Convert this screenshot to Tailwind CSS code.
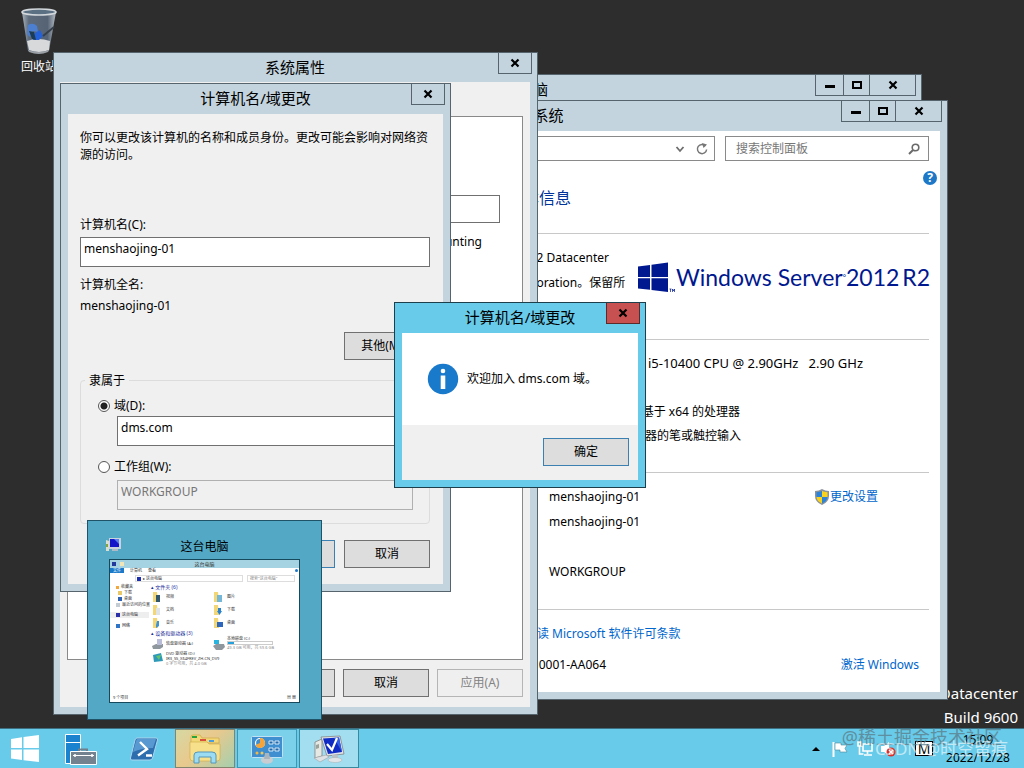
<!DOCTYPE html>
<html lang="zh-CN">
<head>
<meta charset="utf-8">
<meta name="viewport" content="width=device-width, initial-scale=1">
<title>系统属性</title>
<script src="https://cdn.jsdelivr.net/npm/@tailwindcss/browser@4"></script>
</head>
<body class="flex h-screen flex-col overflow-hidden bg-[#2d2d2d] font-['Noto_Sans','Noto_Sans_CJK_SC',sans-serif] text-xs text-black">

<main class="relative min-h-0 flex-1">

  <!-- Desktop icon -->
  <div class="absolute left-[7px] top-2 flex w-16 flex-col items-center text-white">
    <svg class="h-[46px] w-10" viewBox="0 0 40 46" aria-hidden="true">
      <defs><linearGradient id="bin" x1="0" x2="1"><stop offset="0" stop-color="#a9b3bd"/><stop offset=".2" stop-color="#5d6b7c"/><stop offset=".75" stop-color="#566374"/><stop offset="1" stop-color="#b4bcc4"/></linearGradient></defs>
      <path d="M3 4 L9 43 Q20 48 30 43 L37 4Z" fill="url(#bin)"/>
      <path d="M8 33 Q19 29 31 33 L30 42 Q20 46 10 42Z" fill="#d8d9db"/>
      <path d="M9 42 Q20 46 30 42 L29 44 Q20 48 10 44Z" fill="#9aa0a6"/>
      <path d="M9 17 q5 -3 9 1 l1 6 -5 -1 -3 6 -3 -3z" fill="#4d7fd0"/><path d="M16 25 l5 -3 3 6 -4 4 -6 0z" fill="#2460d8"/><path d="M10 23 l5 1 2 8 -4 -1z" fill="#1c3c54"/>
      <path d="M35 19 L24 28" stroke="#36404c" stroke-width="2"/>
      <ellipse cx="20" cy="4" rx="17" ry="3" fill="#5c7084" stroke="#d3d8dc" stroke-width="1.6"/>
    </svg>
    <span class="mt-[5px] whitespace-nowrap leading-4">回收站</span>
  </div>

  <!-- Build stamp -->
  <div class="absolute -bottom-px right-1.5 text-right text-[15px] leading-6 text-white">
    <p>Datacenter</p>
    <p>Build 9600</p>
  </div>

  <!-- Explorer window at the back -->
  <section aria-label="这台电脑" class="absolute left-[114px] top-[74px] h-[560px] w-[808px] border border-[#56656d] bg-[#c3d4de]">
    <header class="relative">
      <h2 class="text-center text-[15px] leading-7">这台电脑</h2>
      <div class="absolute right-[5px] top-0 flex h-[21px] border border-t-0 border-[#56656d]">
        <button aria-label="最小化" class="flex w-7 items-center justify-center border-r border-[#56656d]"><svg class="h-2.5 w-2.5" viewBox="0 0 10 10"><path d="M0 5h10v3H0z"/></svg></button>
        <button aria-label="最大化" class="flex w-[26px] items-center justify-center border-r border-[#56656d]"><svg class="h-2.5 w-2.5" viewBox="0 0 10 10"><path d="M1 2h8v6h-8z" fill="none" stroke="#000" stroke-width="2"/></svg></button>
        <button aria-label="关闭" class="flex w-[45px] items-center justify-center"><svg class="h-2.5 w-2.5" viewBox="0 0 10 10"><path d="M1.500 1.500l7 7m0-7l-7 7" stroke="#000" stroke-width="2.200"/></svg></button>
      </div>
    </header>
  </section>

  <!-- System window -->
  <section aria-label="系统" class="absolute left-[149px] top-[100px] flex h-[600px] w-[799px] flex-col border border-[#56656d] bg-[#c3d4de] px-[7px] pb-[7px]">
    <header class="relative h-[30px] shrink-0">
      <h2 class="text-center text-[15px] leading-7">系统</h2>
      <div class="absolute -right-0.5 top-0 flex h-[21px] border border-t-0 border-[#56656d]">
        <button aria-label="最小化" class="flex w-7 items-center justify-center border-r border-[#56656d]"><svg class="h-2.5 w-2.5" viewBox="0 0 10 10"><path d="M0 5h10v3H0z"/></svg></button>
        <button aria-label="最大化" class="flex w-[26px] items-center justify-center border-r border-[#56656d]"><svg class="h-2.5 w-2.5" viewBox="0 0 10 10"><path d="M1 2h8v6h-8z" fill="none" stroke="#000" stroke-width="2"/></svg></button>
        <button aria-label="关闭" class="flex w-[45px] items-center justify-center"><svg class="h-2.5 w-2.5" viewBox="0 0 10 10"><path d="M1.500 1.500l7 7m0-7l-7 7" stroke="#000" stroke-width="2.200"/></svg></button>
      </div>
    </header>
    <div class="flex-1 bg-white pl-[372px] pr-[11px] pt-[5px]">
      <div class="flex gap-2.5">
        <div class="flex h-[25px] flex-1 items-center justify-end gap-2.5 border border-[#8a8a8a] pr-1.5">
          <button aria-label="历史记录"><svg class="h-3 w-3" viewBox="0 0 12 12"><path d="M2.500 4l3.500 4 3.500-4" fill="none" stroke="#6d6d6d" stroke-width="1.800"/></svg></button>
          <button aria-label="刷新"><svg class="h-3 w-3" viewBox="0 0 12 12"><path d="M9.500 3A4.600 4.600 0 1 0 10.600 6.500" fill="none" stroke="#777" stroke-width="1.500"/><path d="M6 0l5 1.500-3.500 3.500z" fill="#777"/></svg></button>
        </div>
        <label class="flex h-[25px] w-[204px] items-center border border-[#8a8a8a] pl-2.5 pr-2">
          <input type="search" aria-label="搜索控制面板" placeholder="搜索控制面板" class="min-w-0 flex-1 bg-transparent outline-none placeholder:text-[#777]">
          <svg class="h-3 w-3" viewBox="0 0 12 12" aria-hidden="true"><circle cx="7.500" cy="4.500" r="3.300" fill="none" stroke="#6a6a6a" stroke-width="1.600"/><path d="M5 7L1 11" stroke="#6a6a6a" stroke-width="2"/></svg>
        </label>
      </div>
      <div class="-mr-2 mt-2.5 flex h-[15px] justify-end">
        <button aria-label="帮助" class="flex h-3.5 w-3.5 items-center justify-center rounded-full bg-[#1d78c8] text-xs font-bold leading-none text-white">?</button>
      </div>
      <h3 class="flex h-6 w-[42px] items-center justify-end whitespace-nowrap text-base text-[#003399]">本信息</h3>
      <div class="mt-[23px] flex h-[106px] border-t border-[#c8c8c8] pt-[11px]">
        <div class="w-[108px] shrink-0 whitespace-nowrap leading-[25px]">
          <p>R2 Datacenter</p>
          <p>poration。保留所</p>
        </div>
        <div class="flex h-16 items-center gap-px text-[#00188f]">
          <svg class="h-[31px] w-[38px] shrink-0" viewBox="0 0 38 31" aria-hidden="true"><path d="M1 4.500L13 3v12H1zM14.500 2.800L31 .5V15H14.500zM1 16.300h12v11.500L1 26.500zM14.500 16.300H31V30l-16.500-2z" fill="#00188f"/><path d="M32.500 27h2m-1 0v3M35.500 30v-3l1 2 1-2v3" fill="none" stroke="#00188f" stroke-width=".7"/></svg>
          <p class="flex items-baseline whitespace-nowrap font-['Lato','Noto_Sans',sans-serif] text-[23px] leading-8"><span>Windows Server</span><span class="self-center text-[8px]">°</span><span>2012</span><span class="ml-[3px]">R2</span></p>
        </div>
      </div>
      <div class="h-[133px] border-t border-[#c8c8c8] pt-3">
        <p class="h-12 w-[334px] whitespace-pre text-right text-[13px] leading-[23px]">) i5-10400 CPU @ 2.90GHz   2.90 GHz</p>
        <p class="w-[211px] text-right leading-6">基于 x64 的处理器</p>
        <p class="w-[212px] text-right leading-6">示器的笔或触控输入</p>
      </div>
      <div class="flex h-[137px] justify-between border-t border-[#c8c8c8] pl-5 pr-[51px] pt-[11px]">
        <div class="leading-[25px]">
          <p>menshaojing-01</p>
          <p class="mb-[25px]">menshaojing-01</p>
          <p>WORKGROUP</p>
        </div>
        <a href="#" class="flex h-[26px] items-center gap-px text-[#0066cc]">
          <svg class="h-4 w-3.5" viewBox="0 0 14 16" aria-hidden="true"><path d="M7 0Q10 2 14 2V7Q14 13 7 16 0 13 0 7V2Q4 2 7 0Z" fill="#8a929b"/><path d="M7 2V8H1.500V3.200Q5 3 7 2Z" fill="#2d83d8"/><path d="M7 2V8h5.500V3.200Q9 3 7 2Z" fill="#f8d21c"/><path d="M7 8H1.500Q2 12.500 7 14.500Z" fill="#f8d21c"/><path d="M7 8h5.500Q12 12.500 7 14.500Z" fill="#2d83d8"/></svg>
          <span>更改设置</span>
        </a>
      </div>
      <div class="border-t border-[#c8c8c8] pt-3">
        <p class="whitespace-nowrap pl-2 leading-6"><a href="#" class="text-[#0066cc]">读 Microsoft 软件许可条款</a></p>
        <div class="mt-[7px] flex justify-between pr-2.5 leading-6">
          <p class="w-[77px] text-right">0001-AA064</p>
          <a href="#" class="text-[#0066cc]">激活 Windows</a>
        </div>
      </div>
    </div>
  </section>

  <!-- System properties -->
  <section aria-label="系统属性" class="absolute left-[53px] top-[52px] flex h-[663px] w-[485px] flex-col border border-[#56656d] bg-[#c3d4de] pb-[7px] pl-1.5 pr-[7px]">
    <header class="relative h-[29px] shrink-0">
      <h2 class="text-center text-[15px] leading-7">系统属性</h2>
      <button aria-label="关闭" class="absolute -right-0.5 top-0 flex h-[21px] w-[34px] items-center justify-center border border-t-0 border-[#56656d]"><svg class="h-2.5 w-2.5" viewBox="0 0 10 10"><path d="M1.500 1.500l7 7m0-7l-7 7" stroke="#000" stroke-width="2.200"/></svg></button>
    </header>
    <div class="flex flex-1 flex-col bg-[#f0f0f0] px-[7px] pb-2.5 pt-[34px]">
      <div class="flex flex-1 flex-col items-end border border-[#898989] bg-white pr-[22px] pt-[78px]">
        <input type="text" aria-label="计算机描述" class="h-7 w-60 border border-[#707070] bg-white px-1 outline-none">
        <p class="mt-[7px] pr-[18px] leading-6">Accounting</p>
      </div>
      <div class="mt-[9px] flex justify-end gap-2">
        <button class="h-7 w-[86px] border border-[#707070] bg-[#dddddd]">确定</button>
        <button class="h-7 w-[86px] border border-[#707070] bg-[#dddddd]">取消</button>
        <button disabled class="h-7 w-[86px] border border-[#b5b5b5] bg-[#efefef] text-[#838383]">应用(A)</button>
      </div>
    </div>
  </section>

  <!-- Computer name / domain changes -->
  <section aria-label="计算机名/域更改" class="absolute left-[60px] top-[83px] flex h-[509px] w-[391px] flex-col border border-[#56656d] bg-[#c3d4de] px-[7px] pb-[7px]">
    <header class="relative h-[30px] shrink-0">
      <h2 class="text-center text-[15px] leading-7">计算机名/域更改</h2>
      <button aria-label="关闭" class="absolute -right-0.5 top-0 flex h-[21px] w-[34px] items-center justify-center border border-t-0 border-[#56656d]"><svg class="h-2.5 w-2.5" viewBox="0 0 10 10"><path d="M1.500 1.500l7 7m0-7l-7 7" stroke="#000" stroke-width="2.200"/></svg></button>
    </header>
    <form class="flex flex-1 flex-col bg-[#f0f0f0] pl-3 pr-[13px] pt-[15px]">
      <p class="h-[87px] leading-[17px]">你可以更改该计算机的名称和成员身份。更改可能会影响对网络资源的访问。</p>
      <label for="cname" class="leading-[17px]">计算机名(C):</label>
      <input id="cname" type="text" value="menshaojing-01" class="mt-1 h-[30px] border border-[#707070] bg-white px-[3px] pb-2 outline-none">
      <p class="mt-[9px] leading-[17px]">计算机全名:</p>
      <p class="mt-1 leading-[17px]">menshaojing-01</p>
      <button type="button" class="mt-[18px] h-7 w-[86px] self-end whitespace-nowrap border border-[#707070] bg-[#dddddd]">其他(M)...</button>
      <fieldset class="mt-3 h-[152px] rounded-sm border border-[#dcdcdc] pl-[17px] pr-4">
        <legend class="-ml-[13px] px-1 leading-[17px]">隶属于</legend>
        <label class="mt-2 flex items-center gap-1 leading-[17px]"><input type="radio" name="member" checked class="h-3 w-3 appearance-none rounded-full border border-[#555] bg-white checked:bg-[radial-gradient(circle,#222_0_3px,#fff_4px)]">域(D):</label>
        <input type="text" aria-label="域" value="dms.com" class="ml-[19px] mt-0.5 h-[30px] w-[296px] border border-[#707070] bg-white px-[3px] pb-2 outline-none">
        <label class="mt-3 flex items-center gap-1 leading-[17px]"><input type="radio" name="member" class="h-3 w-3 appearance-none rounded-full border border-[#555] bg-white checked:bg-[radial-gradient(circle,#222_0_3px,#fff_4px)]">工作组(W):</label>
        <input type="text" aria-label="工作组" value="WORKGROUP" disabled class="ml-[19px] mt-[5px] h-[30px] w-[296px] border border-[#b0b0b0] px-[3px] pb-2 text-[#777]">
      </fieldset>
      <div class="mt-4 flex justify-end gap-[9px]">
        <button type="button" class="h-7 w-[86px] border border-[#3c7fb1] bg-[#dddddd]">确定</button>
        <button type="button" class="h-7 w-[86px] border border-[#707070] bg-[#dddddd]">取消</button>
      </div>
    </form>
  </section>

  <!-- Message box -->
  <section role="dialog" aria-label="计算机名/域更改" class="absolute left-[394px] top-[302px] flex h-[186px] w-[252px] flex-col border border-[#1d3f4c] bg-[#68cbe9] px-[7px] pb-[7px]">
    <header class="relative h-[30px] shrink-0">
      <h2 class="text-center text-[15px] leading-7">计算机名/域更改</h2>
      <button aria-label="关闭" class="absolute -right-0.5 top-0 flex h-[21px] w-[34px] items-center justify-center border border-t-0 border-[#5b2a2a] bg-[#c75050]"><svg class="h-2.5 w-2.5" viewBox="0 0 10 10"><path d="M1.500 1.500l7 7m0-7l-7 7" stroke="#000" stroke-width="2.200"/></svg></button>
    </header>
    <div class="flex flex-1 items-center gap-2 bg-white pl-[25px]">
      <svg class="h-8 w-8" viewBox="0 0 32 32" aria-hidden="true"><circle cx="16" cy="16" r="15.200" fill="#1979ca"/><circle cx="16" cy="8" r="2.300" fill="#fff"/><path d="M13.700 12.500h4.600V26h-4.600z" fill="#fff"/></svg>
      <p>欢迎加入 dms.com 域。</p>
    </div>
    <footer class="flex h-[55px] items-start justify-end bg-[#f0f0f0] pr-[9px] pt-[13px]">
      <button class="h-7 w-[86px] border border-[#3c7fb1] bg-[#dddddd]">确定</button>
    </footer>
  </section>

  <!-- Taskbar preview -->
  <section aria-label="任务栏预览" class="absolute left-[87px] top-[520px] h-[200px] w-[235px] border border-[#1f5468] bg-[#53a8c5] px-[21px] pt-3.5">
    <header class="relative h-6">
      <svg class="absolute -left-1 top-0.5 h-4 w-4" viewBox="0 0 16 16" aria-hidden="true"><path d="M1 3l3 1v10H1z" fill="#d9dfd0"/><path d="M1 7h2v3H1z" fill="#87a53c"/><path d="M4 1h12v11H4z" fill="#c9d3dd"/><path d="M5 2h9v8H5z" fill="#1414c8"/><path d="M9 2h5v5z" fill="#5a7df0"/><path d="M7 12h6v2H7z" fill="#aebbc6"/></svg>
      <h2 class="text-center text-xs leading-6">这台电脑</h2>
    </header>
    <div class="flex h-[144px] flex-col border border-[#16495c] bg-white text-[5px] leading-[6px] text-[#333]">
      <div class="flex h-2 items-center gap-1 bg-[#a6d3e2] px-0.5"><span class="h-1 w-1 bg-[#223a9c]"></span><span class="h-1 w-1 bg-[#f2e6b8]"></span><p class="flex-1 pr-4 text-center">这台电脑</p></div>
      <div class="flex h-[5px] items-center gap-1.5 leading-[5px]"><span class="h-[5px] w-3.5 bg-[#1979ca] text-center text-[4px] text-white">文件</span><span class="text-[4px]">计算机</span><span class="text-[4px]">查看</span><span class="ml-auto mr-px h-[3px] w-[3px] rounded-full bg-[#1d78c8]"></span></div>
      <div class="mt-0.5 flex gap-1 pl-[25px] pr-1 text-[4px] leading-[5px]"><span class="flex h-[7px] flex-1 items-center gap-0.5 border border-[#ddd] pl-px"><i class="h-1 w-1 bg-[#1c2fae]"></i>▸ 这台电脑</span><span class="h-[7px] w-12 border border-[#ddd] pl-0.5 text-[#888]">搜索"这台电脑"</span></div>
      <div class="mt-0.5 flex flex-1">
        <div class="w-[39px] text-[4px]">
          <p class="flex items-center gap-0.5 pl-1.5"><i class="h-[3px] w-[3px] bg-[#f3a83b]"></i>收藏夹</p>
          <p class="flex items-center gap-0.5 pl-2"><i class="h-1 w-1 bg-[#e8c867]"></i>下载</p>
          <p class="flex items-center gap-0.5 pl-2"><i class="h-1 w-1 bg-[#2e62b4]"></i>桌面</p>
          <p class="flex items-center gap-0.5 whitespace-nowrap pl-1.5"><i class="h-1 w-1 shrink-0 bg-[#c4ccd4]"></i>最近访问的位置</p>
          <p class="mt-1 flex items-center gap-0.5 bg-[#eeeeee] pl-1.5"><i class="h-1 w-1 bg-[#2b2fa8]"></i>这台电脑</p>
          <p class="mt-[5px] flex items-center gap-0.5 pl-1.5"><i class="h-1 w-1 bg-[#2e75c8]"></i>网络</p>
        </div>
        <div class="flex-1 pl-0.5">
          <p class="text-[#1e2f9b]">▴ 文件夹 (6)</p>
          <div class="grid grid-cols-[61px_1fr] pl-px text-[4px] leading-[13px]">
            <p class="flex items-center gap-1"><svg class="h-3 w-2.5" viewBox="0 0 10 12"><path d="M1 1h4l1 10H1z" fill="#f3d675"/><path d="M4 4h4v7H4z" fill="#31576a"/></svg>视频</p>
            <p class="flex items-center gap-1"><svg class="h-3 w-2.5" viewBox="0 0 10 12"><path d="M1 1h4l1 10H1z" fill="#f3d675"/><path d="M4 4h5v7H4z" fill="#74b7d8"/></svg>图片</p>
            <p class="flex items-center gap-1"><svg class="h-3 w-2.5" viewBox="0 0 10 12"><path d="M1 1h4l1 10H1z" fill="#f3d675"/><path d="M4 4h4v7H4z" fill="#dfe4e8"/></svg>文档</p>
            <p class="flex items-center gap-1"><svg class="h-3 w-2.5" viewBox="0 0 10 12"><path d="M1 1h4l1 10H1z" fill="#f3d675"/><path d="M5 4h3v3h1l-2.500 4L4 7h1z" fill="#2a82cf"/></svg>下载</p>
            <p class="flex items-center gap-1"><svg class="h-3 w-2.5" viewBox="0 0 10 12"><path d="M1 1h4l1 10H1z" fill="#f3d675"/><path d="M5 4h2v5l-3 2V8z" fill="#3f93d0"/></svg>音乐</p>
            <p class="flex items-center gap-1"><svg class="h-3 w-2.5" viewBox="0 0 10 12"><path d="M1 1h4l1 10H1z" fill="#f3d675"/><path d="M4 5h6v5H4z" fill="#2c67bd"/></svg>桌面</p>
          </div>
          <p class="mt-px text-[#1e2f9b]">▴ 设备和驱动器 (3)</p>
          <div class="grid grid-cols-[61px_1fr] pl-px text-[4px] leading-[5px]">
            <p class="flex h-[15px] items-center gap-0.5"><svg class="h-2.5 w-3" viewBox="0 0 12 10"><path d="M0 7l4-2h7v3L8 10H1z" fill="#8f979e"/><path d="M5 0h5v6H5z" fill="#b9bdd8"/></svg>软盘驱动器 (A:)</p>
            <div class="flex h-[15px] gap-0.5"><svg class="mt-1 h-2.5 w-3" viewBox="0 0 12 10"><path d="M0 6l3-2h8l1 3-3 3H3z" fill="#8f979e"/><path d="M1 0h5v4H1z" fill="#28b4e0"/></svg>
              <div><p class="whitespace-nowrap">本地磁盘 (C:)</p><div class="h-1 w-[46px] border border-[#ccc]"><div class="h-full w-1.5 bg-[#26a0da]"></div></div><p class="whitespace-nowrap text-[#888]">49.3 GB 可用，共 59.6 GB</p></div></div>
            <div class="flex gap-0.5"><svg class="mt-0.5 h-2.5 w-3 shrink-0" viewBox="0 0 12 10"><path d="M1 2l8-2 2 8-9 1z" fill="#2f9ab8"/><path d="M4 3l5-1-2 5z" fill="#65c466"/></svg>
              <div class="whitespace-nowrap"><p>DVD 驱动器 (D:)</p><p>IR3_SS_X64FREV_ZH-CN_DV9</p><p class="text-[#888]">0 字节可用，共 4.0 GB</p></div></div>
          </div>
        </div>
      </div>
      <div class="flex h-[7px] justify-between px-[3px] text-[4px]"><span>9 个项目</span><span>▤ ▦</span></div>
    </div>
  </section>
</main>

<!-- Taskbar -->
<footer class="relative flex h-10 shrink-0 items-stretch border-t border-[#3d7082] bg-[#68cbe9]">
  <button aria-label="开始" class="flex w-[50px] items-center justify-center">
    <svg class="h-[27px] w-7" viewBox="0 0 28 27"><path d="M0 4l11-1.700V13H0zM12.500 2L28 0v13H12.500zM0 14.500h11v10.500L0 23.500zM12.500 14.500H28V27l-15.500-1.800z" fill="#fff"/></svg>
  </button>
  <button aria-label="服务器管理器" class="flex w-[62px] items-center justify-center">
    <svg class="h-[34px] w-8" viewBox="0 0 32 34"><path d="M.5 2.500h15v29H.5z" fill="#1b82d0" stroke="#fff"/><path d="M.5 10.500h15" stroke="#fff"/><path d="M14 20v-2.500h8V20" fill="none" stroke="#6f7f8c" stroke-width="2"/><path d="M5.500 19.500h26V32.500h-26z" fill="#74828f" stroke="#fff"/><path d="M8 23.500h21" stroke="#fff"/><path d="M10 22v3m17-3v3" stroke="#fff" stroke-width="1.500"/></svg>
  </button>
  <button aria-label="PowerShell" class="flex w-[63px] items-center justify-center">
    <svg class="h-6 w-7" viewBox="0 0 28 24"><path d="M7 1h19q2 0 1.500 2l-5 18q-.5 2-2.500 2H2q-2 0-1.500-2l4.500-18q.5-2 2-2z" fill="#2f6eae" stroke="#a9d5ef"/><path d="M7 2h19l-3 9Q12 11 3 15l3-11z" fill="#5799d0"/><path d="M10 5l7 7-9 6.500M16 18.500h6" fill="none" stroke="#fff" stroke-width="2.400"/></svg>
  </button>
  <button aria-label="文件资源管理器" class="flex w-[60px] items-center justify-center border border-[#83846b] bg-[linear-gradient(135deg,#d6d8a3,#e9c98d_45%,#a5cfae)]">
    <svg class="h-8 w-8" viewBox="0 0 32 32"><path d="M2 4q0-2 2-2h7l2 3h17v5H2z" fill="#f1d777" stroke="#c99f3a" stroke-width=".6"/><path d="M3 3h5v2H3z" fill="#26a33c"/><path d="M11 6h6v2h-6z" fill="#d8503b"/><path d="M20 7h5v2h-5z" fill="#4a9ddc"/><path d="M1 9h17l2 2h11v14q0 3-3 3H4q-3 0-3-3z" fill="#f7e08c" stroke="#cfa843" stroke-width=".6"/><path d="M5 30V22q0-3 4-3h14q4 0 4 3v8h-5v-6H10v6z" fill="#9bdcf3" stroke="#5596b9"/></svg>
  </button>
  <button aria-label="控制面板" class="ml-0.5 flex w-[60px] items-center justify-center border border-[#3f97b4] bg-[#7bd0ea]">
    <svg class="h-[30px] w-8" viewBox="0 0 32 30"><rect x=".5" y="2.500" width="31" height="21" rx="1" fill="#3f8fd0" stroke="#bfe3f5"/><circle cx="9" cy="9" r="4.500" fill="none" stroke="#fff" stroke-width="1.200"/><path d="M9 9V4a5 5 0 1 1-4.500 7z" fill="#f4a43a"/><path d="M18 7h4v3h-4zM24 7h4v3h-4zM18 14h4v3h-4zM24 14h4v3h-4z" fill="#246aab" stroke="#fff" stroke-width=".8"/><circle cx="6" cy="19" r="1.500" fill="#f6b73e"/><circle cx="11" cy="19" r="1.500" fill="#f3c757"/><ellipse cx="16" cy="26" rx="6" ry="3.800" fill="#c9cdd2"/><path d="M14 19h4l1 6h-6z" fill="#aab4be"/></svg>
  </button>
  <button aria-label="系统" class="ml-0.5 flex w-[60px] items-center justify-center border border-[#39899f] bg-[#a3def0]">
    <svg class="h-8 w-8" viewBox="0 0 32 32"><path d="M2 9l7-3v17l-7 2z" fill="#e6e8e4" stroke="#777" stroke-width=".7"/><path d="M3 12l3-1v4l-3 1z" fill="#9aa29c"/><path d="M8 4l19-1 4 18-17 2z" fill="#e1e4e8" stroke="#777" stroke-width=".7"/><path d="M10 5.500l16-1 3 14.500-14 2z" fill="#102bc4"/><path d="M21 5l5-.5 3 14.500z" fill="#2f5de8"/><path d="M14 11l5 6 5-12" fill="none" stroke="#fff" stroke-width="2.200"/><path d="M1 25l12-3 3 2-9 5z" fill="#dfe2e5" stroke="#999" stroke-width=".5"/><path d="M19 22h6v4h-6z" fill="#b9c1c8"/><ellipse cx="22" cy="27" rx="7" ry="2.500" fill="#e2e5e7" stroke="#a5adb3" stroke-width=".5"/></svg>
  </button>

  <div class="ml-auto flex items-center pr-[13px]">
    <button aria-label="显示隐藏的图标" class="mr-3"><svg class="h-1.5 w-2" viewBox="0 0 8 6"><path d="M4 1l4 4H0z"/></svg></button>
    <svg class="mr-[9px] h-4 w-4" viewBox="0 0 16 16" role="img" aria-label="操作中心"><path d="M1.500 1v15" stroke="#fff" stroke-width="2"/><path d="M3 2h6v2h6l-2 3.500 2 3.500H8V9H3z" fill="#fff" stroke="#47869a" stroke-width=".6"/></svg>
    <svg class="mr-[7px] h-4 w-4" viewBox="0 0 16 16" role="img" aria-label="网络"><path d="M6 3h9v7H6zM10.500 10v3M7 14h8M1 1h3v4H1zM2.500 5v8h4" fill="none" stroke="#fff" stroke-width="1.600"/></svg>
    <svg class="mr-[19px] h-4 w-4" viewBox="0 0 16 16" role="img" aria-label="音量"><path d="M1 5h3l5-4v13L4 11H1z" fill="#fff"/><circle cx="11" cy="11" r="4.500" fill="#d8322e"/><path d="M9 9l4 4m0-4l-4 4" stroke="#fff" stroke-width="1.500"/></svg>
    <button aria-label="输入法" class="mr-3 flex h-[15px] w-[18px] items-center justify-center border border-black bg-white text-sm leading-none">M</button>
    <div class="w-[66px] text-center leading-[18px]"><p>15:09</p><p>2022/12/28</p></div>
  </div>

  <!-- Image credit overlays -->
  <p class="pointer-events-none absolute -top-1 right-[22px] whitespace-nowrap text-[18px] leading-6 text-[#5c7f8c]/80">@稀土掘金技术社区</p>
  <p class="pointer-events-none absolute right-4 top-2 whitespace-nowrap text-[17px] leading-6 text-white/60">CSDN @时空留痕</p>
</footer>
</body>
</html>
